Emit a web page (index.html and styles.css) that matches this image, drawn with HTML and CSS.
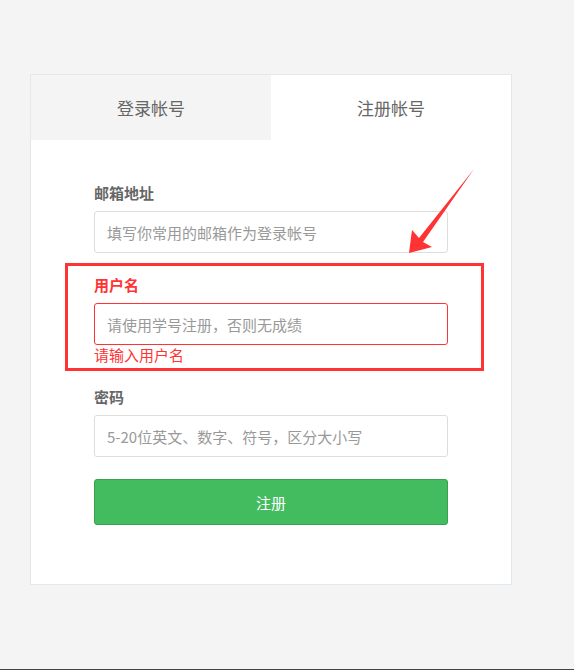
FILE: index.html
```html
<!DOCTYPE html>
<html lang="zh-CN">
<head>
    <meta charset="UTF-8" />
    <title>注册帐号</title>
    <link rel="stylesheet" href="styles.css">
</head>
<body>
<div class="page">
    <div class="card">
        <div class="tabs">
            <div class="tab">登录帐号</div>
            <div class="tab active">注册帐号</div>
        </div>
        <form class="form">
            <div class="field">
                <label>邮箱地址</label>
                <input type="text" placeholder="填写你常用的邮箱作为登录帐号">
            </div>
            <div class="field error">
                <label>用户名</label>
                <input type="text" placeholder="请使用学号注册，否则无成绩">
                <div class="error-msg">请输入用户名</div>
            </div>
            <div class="field">
                <label>密码</label>
                <input type="password" placeholder="5-20位英文、数字、符号，区分大小写">
            </div>
            <button type="button" class="submit">注册</button>
        </form>

        <!-- annotation -->
        <div class="mark-box"></div>
        <svg class="mark-arrow" width="80" height="96" viewBox="0 0 80 96">
            <polygon points="9,89 12,66 19,74 74,5 23,78 32,83" fill="#f33" />
        </svg>
    </div>
</div>
</body>
</html>
```

FILE: styles.css
```css
* {
    box-sizing: border-box;
}
body {
    margin: 0;
    padding: 0;
    background-color: #f4f4f4;
    font-family: "Noto Sans CJK SC", "Noto Sans", sans-serif;
    color: #666;
}
.page {
    height: 670px;
    padding-top: 74px;
    border-bottom: 1px solid #444;
}
.card {
    position: relative;
    width: 482px;
    height: 511px;
    margin-left: 30px;
    background: #fff;
    border: 1px solid #e1e8ee;
}
.tabs {
    display: flex;
    height: 65px;
}
.tab {
    flex: 1;
    display: flex;
    align-items: center;
    justify-content: center;
    font-size: 17px;
    color: #666;
    background: #f4f4f4;
}
.tab.active {
    background: #fff;
}
.form {
    width: 354px;
    margin: 43px auto 0;
}
.field {
    margin-bottom: 22px;
}
.field label {
    display: block;
    font-size: 15px;
    font-weight: bold;
    line-height: 20px;
    margin-bottom: 8px;
    color: #666;
}
.field input {
    display: block;
    width: 100%;
    height: 42px;
    padding: 0 12px;
    font-family: inherit;
    font-size: 15px;
    color: #333;
    border: 1px solid #ddd;
    border-radius: 3px;
    outline: none;
}
.field input::placeholder {
    color: #999;
}
.field.error label {
    color: #f33;
}
.field.error input {
    border-color: #f33;
}
.error-msg {
    font-size: 15px;
    line-height: 20px;
    color: #f33;
}
.submit {
    display: block;
    width: 100%;
    height: 46px;
    font-family: inherit;
    font-size: 15px;
    color: #fff;
    background: #43bc5f;
    border: 1px solid #3a9f51;
    border-radius: 3px;
}
.mark-box {
    position: absolute;
    left: 34px;
    top: 188px;
    width: 419px;
    height: 108px;
    border: 3px solid #f33;
}
.mark-arrow {
    position: absolute;
    left: 369px;
    top: 89px;
}
```
